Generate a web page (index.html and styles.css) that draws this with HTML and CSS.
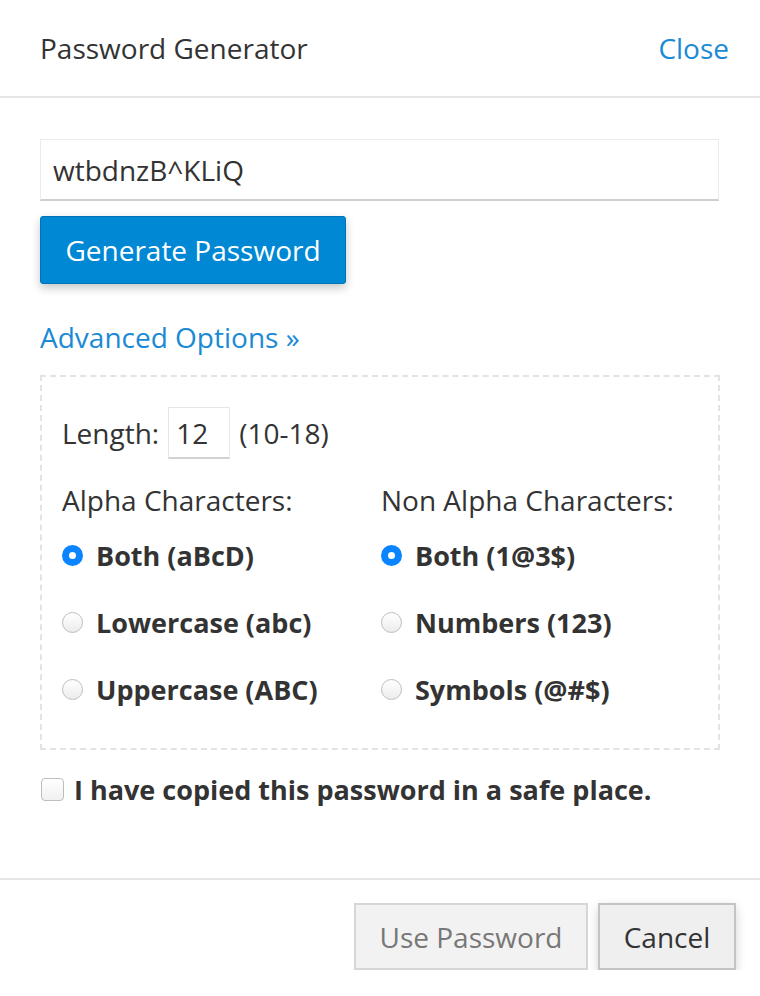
FILE: index.html
```html
<!DOCTYPE html>
<html>
<head>
<meta charset="utf-8">
<link rel="stylesheet" href="styles.css">
</head>
<body>
<div class="dialog">
  <div class="header">
    <div class="title">Password Generator</div>
    <a class="close">Close</a>
  </div>
  <div class="content">
    <div class="pw-input">wtbdnzB^KLiQ</div>
    <button class="btn-generate">Generate Password</button>
    <a class="advanced">Advanced Options »</a>
    <div class="options">
      <div class="length-row">
        <span>Length:</span>
        <span class="len-input">12</span>
        <span>(10-18)</span>
      </div>
      <div class="cols">
        <div class="col">
          <div class="col-title">Alpha Characters:</div>
          <div class="radio-row"><span class="radio checked"></span><span class="lbl">Both (aBcD)</span></div>
          <div class="radio-row"><span class="radio"></span><span class="lbl">Lowercase (abc)</span></div>
          <div class="radio-row"><span class="radio"></span><span class="lbl">Uppercase (ABC)</span></div>
        </div>
        <div class="col">
          <div class="col-title">Non Alpha Characters:</div>
          <div class="radio-row"><span class="radio checked"></span><span class="lbl">Both (1@3$)</span></div>
          <div class="radio-row"><span class="radio"></span><span class="lbl">Numbers (123)</span></div>
          <div class="radio-row"><span class="radio"></span><span class="lbl">Symbols (@#$)</span></div>
        </div>
      </div>
    </div>
    <div class="check-row"><span class="checkbox"></span><span class="lbl">I have copied this password in a safe place.</span></div>
  </div>
  <div class="footer">
    <button class="btn btn-use">Use Password</button>
    <button class="btn btn-cancel">Cancel</button>
  </div>
</div>
</body>
</html>
```
FILE: styles.css
```css
html, body {
  margin: 0;
  padding: 0;
  background: #fff;
}
body {
  font-family: "Open Sans", "DejaVu Sans", sans-serif;
  color: #333;
  font-size: 28px;
  width: 760px;
}
.dialog {
  display: flex;
  flex-direction: column;
}
.header {
  height: 96px;
  display: flex;
  align-items: center;
  justify-content: space-between;
  padding: 0 31px 0 40px;
  border-bottom: 2px solid #e6e6e6;
}
.title {
  font-size: 28px;
  color: #333;
}
.close {
  font-size: 28px;
  color: #1a8ad4;
  cursor: pointer;
}
.content {
  padding: 41px 40px 0 40px;
  display: flex;
  flex-direction: column;
  align-items: flex-start;
}
.pw-input {
  box-sizing: border-box;
  width: 679px;
  height: 62px;
  border: 1px solid #ebebeb;
  border-bottom: 2px solid #cfcfcf;
  padding: 0 12px;
  display: flex;
  align-items: center;
  font-size: 28px;
  color: #333;
}
.btn-generate {
  margin-top: 15px;
  box-sizing: border-box;
  width: 306px;
  height: 68px;
  background: #0088d4;
  border: 1px solid #0072b8;
  border-radius: 3px;
  color: #fff;
  font-family: inherit;
  font-size: 28px;
  box-shadow: 0 4px 10px rgba(0,0,0,0.22);
  padding: 0;
}
.advanced {
  margin-top: 34px;
  color: #1a8ad4;
  font-size: 28px;
  line-height: 38px;
}
.options {
  margin-top: 19px;
  box-sizing: border-box;
  width: 680px;
  border: 2px dashed #e3e3e3;
  padding: 30px 20px 25px 20px;
}
.length-row {
  display: flex;
  align-items: center;
  gap: 9px;
  height: 52px;
}
.len-input {
  box-sizing: border-box;
  width: 62px;
  height: 52px;
  border: 1px solid #e6e6e6;
  border-bottom: 2px solid #d2d2d2;
  padding-left: 7px;
  display: flex;
  align-items: center;
}
.cols {
  margin-top: 22px;
  display: grid;
  grid-template-columns: 319px 1fr;
}
.col-title {
  line-height: 38px;
  margin-bottom: 3px;
}
.radio-row {
  display: flex;
  align-items: center;
  height: 67px;
  gap: 13px;
}
.radio-row .lbl, .check-row .lbl {
  font-weight: 700;
  font-size: 27px;
}
.radio {
  box-sizing: border-box;
  width: 21px;
  height: 21px;
  border-radius: 50%;
  border: 1px solid #bdbdbd;
  background: linear-gradient(#fff, #ececec);
  flex: none;
}
.radio.checked {
  border: 7px solid #0a84ff;
  background: #fff;
}
.check-row {
  margin-top: 21px;
  display: flex;
  align-items: center;
  gap: 10px;
  margin-left: 1px;
  line-height: 37px;
}
.checkbox {
  box-sizing: border-box;
  width: 23px;
  height: 23px;
  border: 1px solid #bdbdbd;
  border-radius: 4px;
  background: linear-gradient(#fff, #f0f0f0);
}
.footer {
  margin-top: 70px;
  border-top: 2px solid #e6e6e6;
  display: flex;
  justify-content: flex-end;
  gap: 10px;
  padding: 23px 24px 0 0;
}
.btn {
  box-sizing: border-box;
  height: 67px;
  font-family: inherit;
  font-size: 28px;
  padding: 0;
}
.btn-use {
  width: 234px;
  background: #f2f2f2;
  border: 2px solid #d6d6d6;
  color: #777;
}
.btn-cancel {
  width: 138px;
  background: #efefef;
  border: 2px solid #c4c4c4;
  color: #333;
  box-shadow: 0 4px 10px rgba(0,0,0,0.18);
}
```
